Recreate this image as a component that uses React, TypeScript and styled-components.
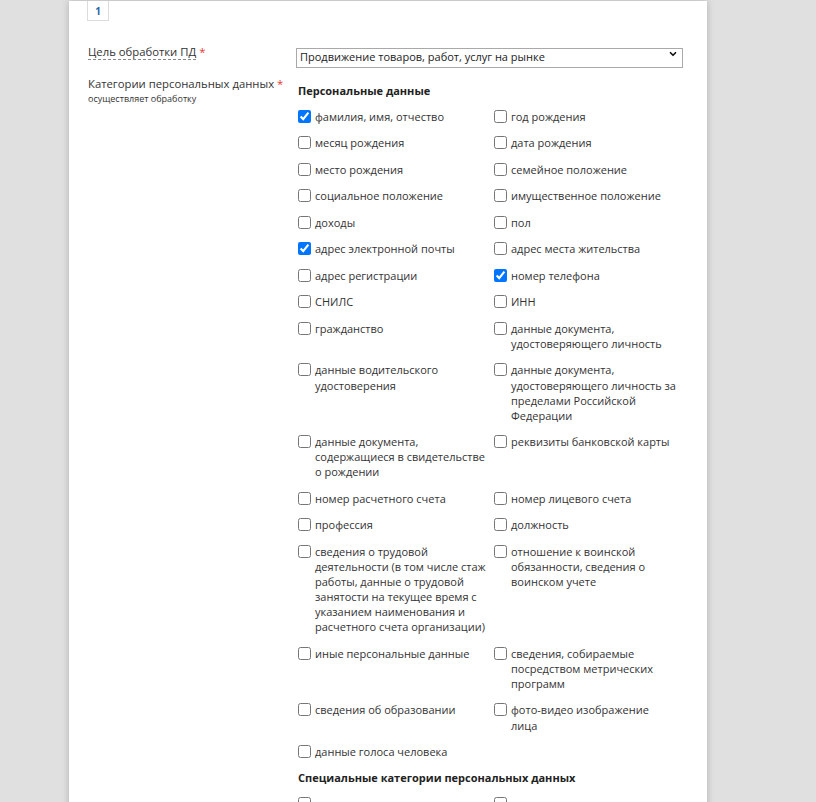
import React from "react";
import styled, { createGlobalStyle } from "styled-components";
import { ChevronDown } from "lucide-react";

const Global = createGlobalStyle`
  html, body { margin: 0; padding: 0; background: #e0e0e0; }
  body { font-family: "Open Sans", "Liberation Sans", sans-serif; color: #333; overflow: hidden; }
`;

const Panel = styled.div`
  width: 638px;
  box-sizing: border-box;
  margin: 1px 0 0 69px;
  min-height: 820px;
  background: #fff;
  box-shadow: 0 0 7px rgba(0, 0, 0, 0.22);
  padding: 0 24px 0 19px;
`;

const Tab = styled.div`
  width: 22px;
  height: 20px;
  margin-left: -1px;
  box-sizing: border-box;
  border: 1px solid #dcdcdc;
  border-top: none;
  display: flex;
  align-items: center;
  justify-content: center;
  font-size: 10px;
  font-weight: 700;
  color: #2a64a8;
`;

const FormRow = styled.div<{ $mt: number }>`
  display: grid;
  grid-template-columns: 208px 1fr;
  margin-top: ${(p) => p.$mt}px;
  align-items: start;
`;

const Label = styled.div`
  font-size: 11.3px;
  line-height: 16px;
  color: #333;
`;

const Dashed = styled.span`
  border-bottom: 1px dashed #888;
`;

const Req = styled.span`
  color: #e53935;
`;

const Hint = styled.div`
  font-size: 9px;
  line-height: 14px;
  color: #333;
`;

const SelectWrap = styled.div`
  position: relative;
  height: 20px;
`;

const Select = styled.select`
  appearance: none;
  -webkit-appearance: none;
  width: 100%;
  height: 20px;
  box-sizing: border-box;
  border: 1px solid #a9a9a9;
  border-radius: 0;
  background: #fff;
  font-family: "Open Sans", "Liberation Sans", sans-serif;
  font-size: 11px;
  line-height: 16px;
  color: #222;
  padding: 0 20px 1px 3px;
  outline: none;
`;

const Chevron = styled.span`
  position: absolute;
  right: 5px;
  top: 5px;
  display: flex;
  pointer-events: none;
  color: #111;
`;

const Fields = styled.div`
  padding: 7px 0 0 2px;
`;

const Heading = styled.div<{ $mt?: number }>`
  font-size: 11px;
  font-weight: 700;
  line-height: 16px;
  color: #222;
  margin-top: ${(p) => p.$mt ?? 0}px;
`;

const Grid = styled.div`
  display: grid;
  grid-template-columns: 196px 196px;
  row-gap: 11.4px;
  margin-top: 10px;
`;

const Item = styled.label`
  display: flex;
  align-items: flex-start;
  font-size: 11px;
  line-height: 15.1px;
  color: #333;
  padding-right: 6px;
`;

const Box = styled.input`
  width: 13px;
  height: 13px;
  margin: 1px 4px 0 0;
  flex: 0 0 13px;
`;

const personal: [string, boolean][] = [
  ["фамилия, имя, отчество", true],
  ["год рождения", false],
  ["месяц рождения", false],
  ["дата рождения", false],
  ["место рождения", false],
  ["семейное положение", false],
  ["социальное положение", false],
  ["имущественное положение", false],
  ["доходы", false],
  ["пол", false],
  ["адрес электронной почты", true],
  ["адрес места жительства", false],
  ["адрес регистрации", false],
  ["номер телефона", true],
  ["СНИЛС", false],
  ["ИНН", false],
  ["гражданство", false],
  ["данные документа, удостоверяющего личность", false],
  ["данные водительского удостоверения", false],
  ["данные документа, удостоверяющего личность за пределами Российской Федерации", false],
  ["данные документа, содержащиеся в свидетельстве о рождении", false],
  ["реквизиты банковской карты", false],
  ["номер расчетного счета", false],
  ["номер лицевого счета", false],
  ["профессия", false],
  ["должность", false],
  ["сведения о трудовой деятельности (в том числе стаж работы, данные о трудовой занятости на текущее время с указанием наименования и расчетного счета организации)", false],
  ["отношение к воинской обязанности, сведения о воинском учете", false],
  ["иные персональные данные", false],
  ["сведения, собираемые посредством метрических программ", false],
  ["сведения об образовании", false],
  ["фото-видео изображение\nлица", false],
  ["данные голоса человека", false],
];

const special: string[] = [
  "расовая принадлежность",
  "национальная принадлежность",
  "политические взгляды",
  "религиозные убеждения",
];

const Text = styled.span`
  white-space: pre-line;
`;

function CheckItem({ text, checked }: { text: string; checked: boolean }) {
  return (
    <Item>
      <Box type="checkbox" defaultChecked={checked} />
      <Text>{text}</Text>
    </Item>
  );
}

export default function App() {
  return (
    <>
      <Global />
      <Panel>
        <Tab>1</Tab>
        <FormRow $mt={23}>
          <Label>
            <Dashed>Цель обработки ПД</Dashed> <Req>*</Req>
          </Label>
          <SelectWrap>
            <Select defaultValue="promo">
              <option value="promo">Продвижение товаров, работ, услуг на рынке</option>
            </Select>
            <Chevron>
              <ChevronDown size={10} strokeWidth={4} />
            </Chevron>
          </SelectWrap>
        </FormRow>
        <FormRow $mt={12}>
          <div>
            <Label>
              Категории персональных данных <Req>*</Req>
            </Label>
            <Hint>осуществляет обработку</Hint>
          </div>
          <Fields>
            <Heading>Персональные данные</Heading>
            <Grid>
              {personal.map(([t, c]) => (
                <CheckItem key={t} text={t} checked={c} />
              ))}
            </Grid>
            <Heading $mt={11}>Специальные категории персональных данных</Heading>
            <Grid>
              {special.map((t) => (
                <CheckItem key={t} text={t} checked={false} />
              ))}
            </Grid>
          </Fields>
        </FormRow>
      </Panel>
    </>
  );
}
